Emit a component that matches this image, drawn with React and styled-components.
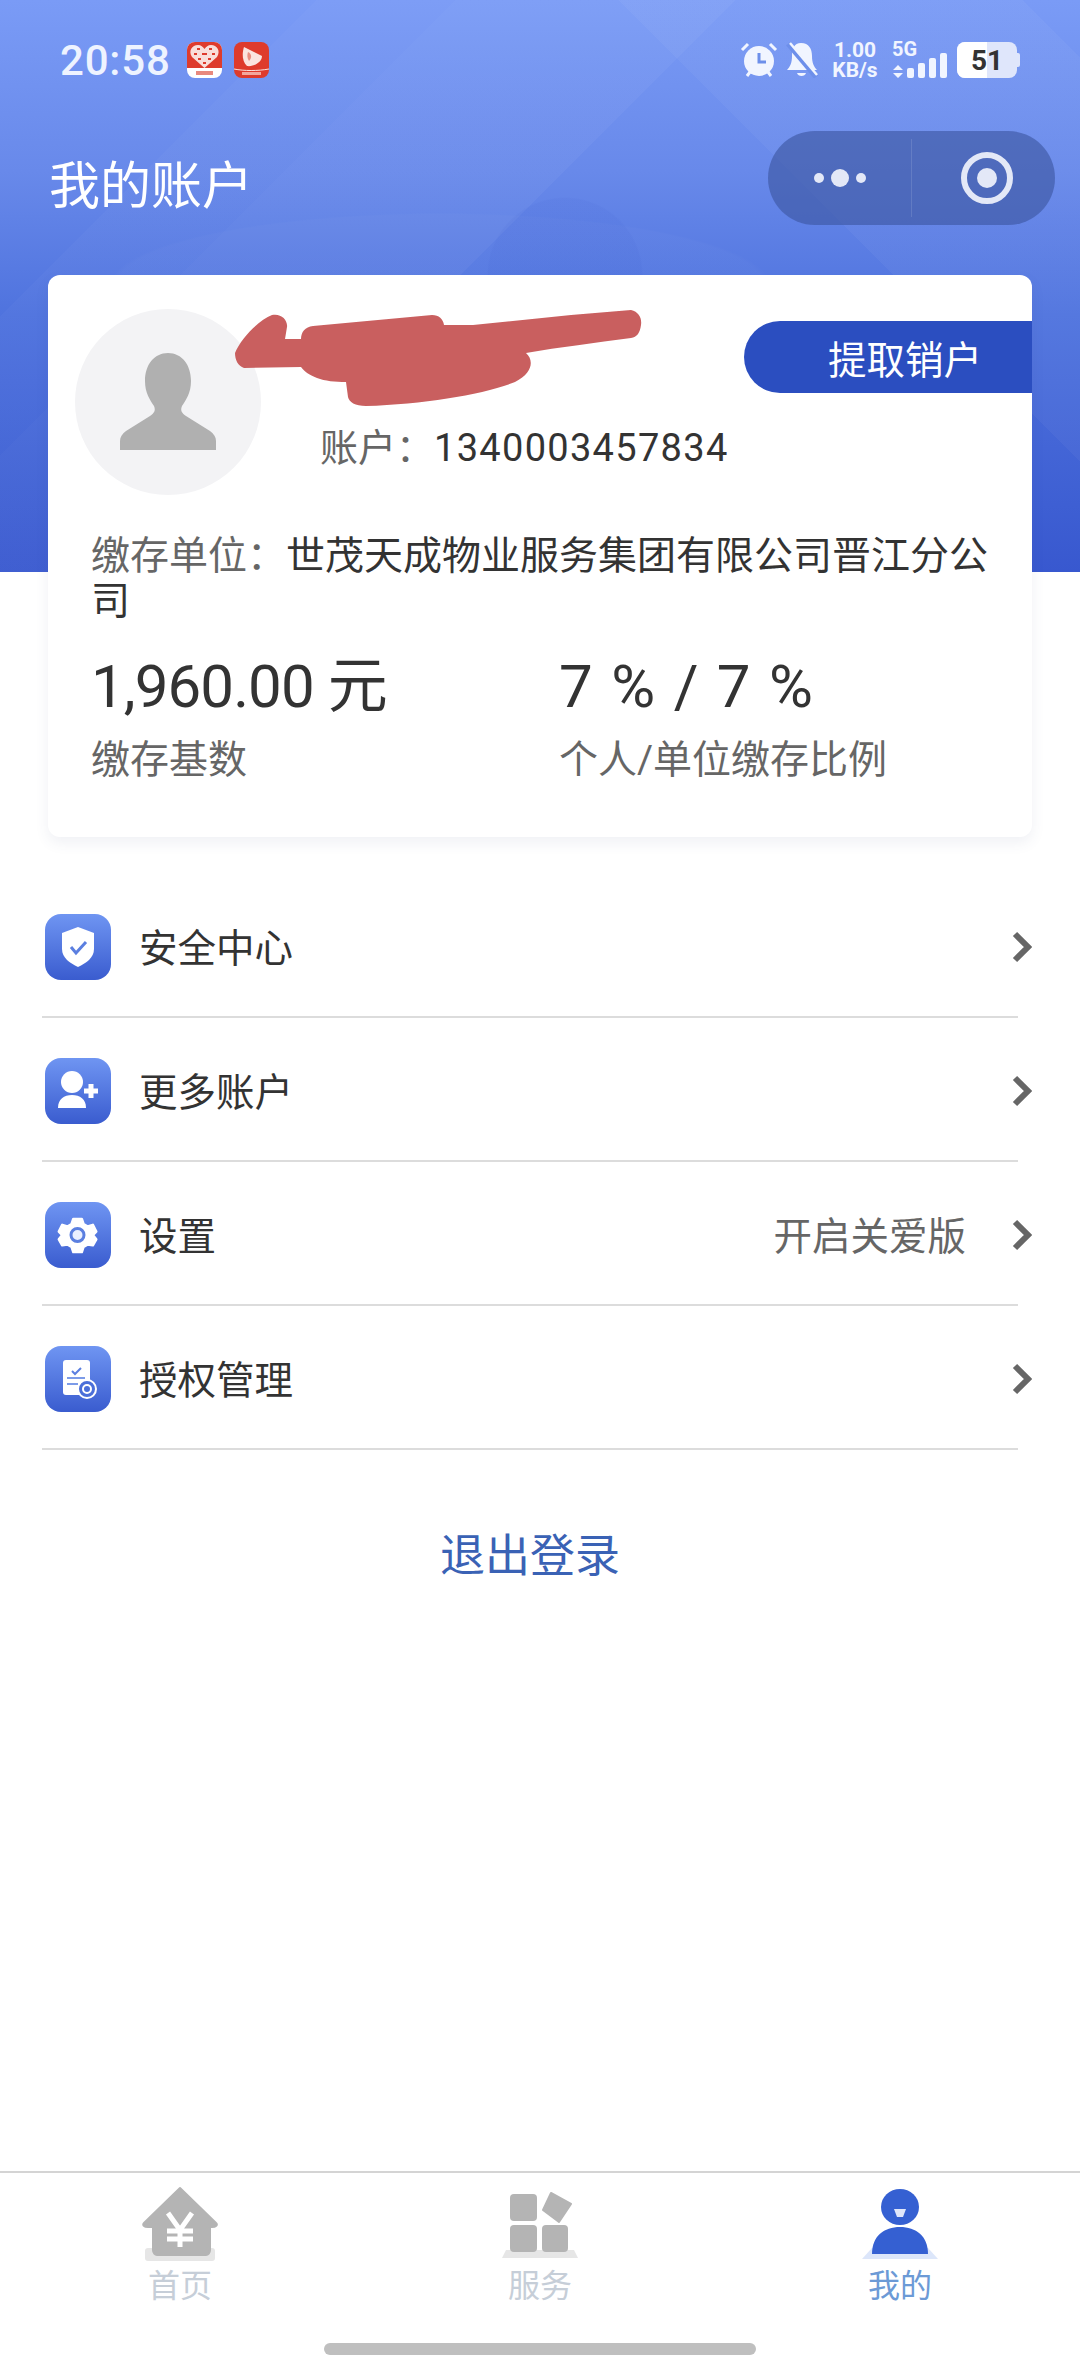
import React from 'react';
import styled, { createGlobalStyle } from 'styled-components';

const GlobalStyle = createGlobalStyle`
  html, body {
    margin: 0;
    padding: 0;
    background: #fff;
  }
  body {
    font-family: Roboto, "Noto Sans CJK SC", sans-serif;
    color: #333;
  }
`;

const rows = [
  { label: '安全中心', icon: 'shield' },
  { label: '更多账户', icon: 'person' },
  { label: '设置', icon: 'gear', extra: '开启关爱版' },
  { label: '授权管理', icon: 'doc' },
];

const ShieldGlyph = () => (
  <>
    <path d="M33 13 L49 19 V35 C49 44 41 49 33 53 C25 49 17 44 17 35 V19 Z" fill="#fff" />
    <path d="M26 33 L31 39 L41 28" fill="none" stroke="#5b7fe0" strokeWidth="3" />
  </>
);

const PersonGlyph = () => (
  <>
    <circle cx="27" cy="24" r="11" fill="#fff" />
    <path d="M13 50 C13 41 19 37 27 37 C35 37 41 41 41 50 Z" fill="#fff" />
    <path d="M46 26 V40 M39 33 H53" stroke="#fff" strokeWidth="5" />
  </>
);

const GearGlyph = () => (
  <>
    <path
      transform="translate(4.5 5) scale(0.85)"
      d="M28 14 H38 L40 20 L45 23 L51 21 L55 29 L51 33 L55 38 L51 45 L45 44 L40 47 L38 53 H28 L26 47 L21 44 L15 45 L11 38 L15 33 L11 29 L15 21 L21 23 L26 20 Z"
      fill="#fff"
      stroke="#fff"
      strokeWidth="3"
      strokeLinejoin="round"
    />
    <circle cx="32.5" cy="33" r="6.5" fill="#eaf0ff" stroke="#5b7fe0" strokeWidth="3" />
  </>
);

const DocGlyph = () => (
  <>
    <rect x="18" y="14" width="27" height="35" rx="3" fill="#fff" />
    <path d="M27 25 L30 28 L36 22" fill="none" stroke="#5b7fe0" strokeWidth="2" />
    <path d="M22 32 H40 M22 38 H33" stroke="#7c9be8" strokeWidth="2" />
    <circle cx="42" cy="43" r="9" fill="#4b6fd9" stroke="#fff" strokeWidth="2" />
    <circle cx="42" cy="43" r="4" fill="none" stroke="#fff" strokeWidth="2" />
  </>
);

const glyphs = { shield: ShieldGlyph, person: PersonGlyph, gear: GearGlyph, doc: DocGlyph };

const RowIcon = ({ name }) => {
  const Glyph = glyphs[name];
  return (
    <IconTile>
      <svg width="66" height="66" viewBox="0 0 66 66">
        <Glyph />
      </svg>
    </IconTile>
  );
};

const Chevron = () => (
  <ChevronSvg width="20" height="32" viewBox="0 0 20 32">
    <path d="M3 3 L16 16 L3 29" fill="none" stroke="#666" strokeWidth="6" />
  </ChevronSvg>
);

const HeartApp = () => (
  <svg width="35" height="36" viewBox="0 0 35 36">
    <rect width="35" height="36" rx="8" fill="#fff" />
    <path d="M0 26 V8 A8 8 0 0 1 8 0 H27 A8 8 0 0 1 35 8 V26 Z" fill="#de3b2c" />
    <path d="M17.5 26 L5 15 C1 9 5 3 11 3 C14 3 16 5 17.5 7 C19 5 21 3 24 3 C30 3 34 9 30 15 Z" fill="#f9ded9" />
    <path
      d="M10 7 H13 M22 7 H25 M7 12 H10 M15 12 H20 M25 12 H28 M11 17 H14 M21 17 H24 M16 21 H19"
      stroke="#de3b2c"
      strokeWidth="2"
    />
    <rect x="9" y="29" width="17" height="4" fill="#e8897e" />
  </svg>
);

const PlayApp = () => (
  <svg width="35" height="36" viewBox="0 0 35 36">
    <rect width="35" height="36" rx="8" fill="#de3b2c" />
    <path d="M10 5 L28 14 C28 20 20 25 13 24 C8 20 8 11 10 5 Z" fill="#fbe4df" />
    <path d="M14 10 C18 12 18 16 15 19 C13 16 13 13 14 10 Z" fill="#e98f82" />
    <path d="M0 27 C10 29 24 29 35 27" fill="none" stroke="#fbe4df" strokeWidth="1" />
    <rect x="8" y="30" width="19" height="3" fill="#f3a79c" />
  </svg>
);

const AlarmIcon = () => (
  <svg width="38" height="36" viewBox="0 0 38 36">
    <circle cx="19" cy="19" r="15" fill="#f1f5ff" />
    <path d="M2 8 L8 2 M36 8 L30 2 M7 34 L10 30 M31 34 L28 30" stroke="#f1f5ff" strokeWidth="3" />
    <path d="M19 11 V20 H26" fill="none" stroke="#6d8fea" strokeWidth="3" />
  </svg>
);

const MutedBell = () => (
  <BellSvg width="32" height="36" viewBox="0 0 32 36">
    <path d="M15 1 C23 1 26 7 26 14 C26 21 28 25 31 28 H1 C4 25 6 21 6 14 C6 7 8 1 15 1 Z" fill="#f1f5ff" />
    <path d="M11 31 H20 C19 35 12 35 11 31 Z" fill="#f1f5ff" />
    <path d="M2 2 L30 35" stroke="#6d8fea" strokeWidth="5" />
    <path d="M4 1 L31 33" stroke="#f1f5ff" strokeWidth="2.5" />
  </BellSvg>
);

const Signal = () => (
  <svg width="56" height="36" viewBox="0 0 56 36">
    <path d="M6 23 L11 28 H1 Z M6 36 L1 31 H11 Z" fill="#f1f5ff" />
    <rect x="15" y="26" width="7" height="10" rx="2" fill="#f1f5ff" />
    <rect x="26" y="21" width="7" height="15" rx="2" fill="#f1f5ff" />
    <rect x="37" y="16" width="7" height="20" rx="2" fill="#f1f5ff" />
    <rect x="48" y="11" width="7" height="25" rx="2" fill="#f1f5ff" />
  </svg>
);

const HomeTabIcon = () => (
  <svg width="84" height="76" viewBox="0 0 84 76">
    <rect x="7" y="62" width="70" height="13" rx="3" fill="#e6e6e6" />
    <path
      d="M42 2 L78 37 C80 39 78 41 74 41 H72 V64 C72 67 70 69 68 69 H19 C17 69 15 67 15 64 V41 H10 C6 41 4 39 6 37 Z"
      fill="#b4b4b4"
      stroke="#b4b4b4"
      strokeWidth="2"
      strokeLinejoin="round"
    />
    <path d="M30 27 L42 44 L54 27 M42 44 V61 M29 45 H55 M29 53 H55" fill="none" stroke="#fff" strokeWidth="5" />
  </svg>
);

const ServiceTabIcon = () => (
  <svg width="84" height="76" viewBox="0 0 84 76">
    <path d="M8 64 H76 L80 72 H4 Z" fill="#e6e6e6" />
    <rect x="12" y="8" width="27" height="27" rx="4" fill="#b4b4b4" />
    <rect x="12" y="39" width="27" height="27" rx="4" fill="#b4b4b4" />
    <rect x="44" y="39" width="26" height="27" rx="4" fill="#b4b4b4" />
    <path
      d="M53 7 L73 18 L61 36 L45 24 Z"
      fill="#b4b4b4"
      stroke="#b4b4b4"
      strokeWidth="2"
      strokeLinejoin="round"
    />
  </svg>
);

const MeTabIcon = () => (
  <svg width="84" height="76" viewBox="0 0 84 76">
    <path d="M14 62 H70 L80 73 H4 Z" fill="#dce6fa" />
    <ellipse cx="42" cy="21" rx="19" ry="18" fill="#3560d2" />
    <path d="M36 23 H48 L45 31 H39 Z" fill="#dfe6fa" />
    <path d="M14 68 C14 50 26 41 42 41 C58 41 70 50 70 68 Z" fill="#3560d2" />
  </svg>
);

const Avatar = () => (
  <AvatarCircle>
    <svg width="96" height="97" viewBox="0 0 96 97">
      <path
        d="M48 0 C62 0 71 12 71 28 C71 40 66 47 62 53 C60 58 62 60 66 63 L90 78 C94 81 96 84 96 88 V97 H0 V88 C0 84 2 81 6 78 L30 63 C34 60 36 58 34 53 C30 47 25 40 25 28 C25 12 34 0 48 0 Z"
        fill="#b0b0b0"
      />
    </svg>
  </AvatarCircle>
);

export default function App() {
  return (
    <>
      <GlobalStyle />
      <Page>
        <StatusBar>
          <StatusLeft>
            <Clock>20:58</Clock>
            <HeartApp />
            <PlayApp />
          </StatusLeft>
          <StatusRight>
            <AlarmIcon />
            <MutedBell />
            <NetSpeed>
              <span>1.00</span>
              <span>KB/s</span>
            </NetSpeed>
            <NetType>
              <NetLabel>5G</NetLabel>
              <Signal />
            </NetType>
            <Battery>
              <BatteryFill />
              <BatteryText>51</BatteryText>
            </Battery>
          </StatusRight>
        </StatusBar>

        <NavBar>
          <Title>我的账户</Title>
          <Capsule>
            <MoreDots>
              <Dot size={10} />
              <Dot size={18} />
              <Dot size={10} />
            </MoreDots>
            <CapsuleDivider />
            <CloseRing />
          </Capsule>
        </NavBar>

        <Card>
          <TopRow>
            <Avatar />
            <AccountLine>
              <Muted>账户：</Muted>1340003457834
            </AccountLine>
            <CancelButton>提取销户</CancelButton>
          </TopRow>
          <Scribble viewBox="0 0 407 96">
            <path
              d="M0 43 C6 28 24 10 37 5 C46 3 53 10 52 17 L50 29 L66 29 C66 22 70 17 78 16 L197 5 C204 5 208 9 209 15 L238 15 L336 5 L396 0 C404 2 407 8 406 15 C405 23 402 27 396 28 C360 33 325 37 291 43 C299 50 298 63 280 72 C250 84 190 94 131 96 C120 96 114 92 113 87 L111 72 C100 72 90 71 82 68 C74 65 69 61 66 57 L9 58 C3 56 0 50 0 43 Z"
              fill="#c95f5f"
            />
          </Scribble>
          <Company>
            <Muted>缴存单位：</Muted>世茂天成物业服务集团有限公司晋江分公司
          </Company>
          <Stats>
            <div>
              <StatValue>1,960.00 元</StatValue>
              <StatLabel>缴存基数</StatLabel>
            </div>
            <div>
              <StatValue wide>7 % / 7 %</StatValue>
              <StatLabel>个人/单位缴存比例</StatLabel>
            </div>
          </Stats>
        </Card>

        <List>
          {rows.map((row) => (
            <ListItem key={row.label}>
              <Row>
                <RowIcon name={row.icon} />
                <RowLabel>{row.label}</RowLabel>
                {row.extra && <RowExtra>{row.extra}</RowExtra>}
                <Chevron />
              </Row>
            </ListItem>
          ))}
        </List>

        <Logout>退出登录</Logout>

        <TabBar>
          <Tab>
            <HomeTabIcon />
            <TabLabel>首页</TabLabel>
          </Tab>
          <Tab>
            <ServiceTabIcon />
            <TabLabel>服务</TabLabel>
          </Tab>
          <Tab>
            <MeTabIcon />
            <TabLabel active>我的</TabLabel>
          </Tab>
        </TabBar>
        <HomeIndicator />
      </Page>
    </>
  );
}

const Page = styled.div`
  width: 1080px;
  height: 2376px;
  overflow: hidden;
  display: flex;
  flex-direction: column;
  background:
    radial-gradient(78px 78px at 565px 275px, rgba(40, 70, 190, 0.055) 98%, transparent) 0 0 / 100% 572px no-repeat,
    radial-gradient(330px 72px at 440px 285px, rgba(255, 255, 255, 0.02) 98%, transparent) 0 0 / 100% 572px no-repeat,
    linear-gradient(135deg, transparent 224px, rgba(255, 255, 255, 0.025) 224px, rgba(255, 255, 255, 0.025) 322px, rgba(255, 255, 255, 0.04) 322px, rgba(255, 255, 255, 0.04) 520px, transparent 520px) 0 0 / 100% 572px no-repeat,
    linear-gradient(225deg, transparent 41px, rgba(255, 255, 255, 0.035) 41px, rgba(255, 255, 255, 0.035) 326px, transparent 326px) 0 0 / 100% 572px no-repeat,
    linear-gradient(180deg, #7a9bf6 0%, #6889ea 30%, #4f73de 55%, #3858cf 100%) 0 0 / 100% 572px no-repeat,
    #fff;
`;

const StatusBar = styled.div`
  height: 131px;
  box-sizing: border-box;
  padding: 42px 63px 0 60px;
  display: flex;
  justify-content: space-between;
  align-items: flex-start;
`;

const StatusLeft = styled.div`
  display: flex;
  align-items: center;
  gap: 12px;
  height: 36px;
`;

const Clock = styled.span`
  font-size: 42px;
  font-weight: 500;
  letter-spacing: 0.8px;
  color: #eef3ff;
  margin-right: 4px;
`;

const StatusRight = styled.div`
  display: flex;
  align-items: flex-start;
  height: 36px;
`;

const BellSvg = styled.svg`
  margin-left: 8px;
`;

const NetSpeed = styled.div`
  display: flex;
  flex-direction: column;
  align-items: center;
  width: 44px;
  margin: -2px 0 0 15px;
  font-size: 21px;
  line-height: 20px;
  font-weight: 700;
  color: #f1f5ff;
`;

const NetType = styled.div`
  position: relative;
  width: 56px;
  margin: 0 9px 0 15px;
`;

const NetLabel = styled.span`
  position: absolute;
  left: 0;
  top: -3px;
  font-size: 20px;
  line-height: 20px;
  font-weight: 700;
  color: #f1f5ff;
`;

const Battery = styled.div`
  position: relative;
  width: 60px;
  height: 36px;
  border-radius: 8px;
  background: #dfe6fb;
  display: flex;
  align-items: center;
  justify-content: center;
  &::after {
    content: '';
    position: absolute;
    right: -3px;
    top: 11px;
    width: 3px;
    height: 14px;
    border-radius: 0 2px 2px 0;
    background: #dfe6fb;
  }
`;

const BatteryFill = styled.div`
  position: absolute;
  left: 0;
  top: 0;
  bottom: 0;
  width: 30px;
  background: #fff;
  border-radius: 8px 0 0 8px;
`;

const BatteryText = styled.span`
  position: relative;
  font-size: 28px;
  font-weight: 700;
  color: #333;
`;

const NavBar = styled.div`
  height: 94px;
  padding: 0 25px 0 49px;
  display: flex;
  align-items: center;
  justify-content: space-between;
`;

const Title = styled.h1`
  margin: 0;
  padding-top: 8px;
  font-size: 51px;
  font-weight: 400;
  color: #fff;
`;

const Capsule = styled.div`
  width: 287px;
  height: 94px;
  border-radius: 47px;
  background: rgba(60, 85, 160, 0.62);
  display: flex;
  align-items: center;
`;

const MoreDots = styled.div`
  width: 143px;
  display: flex;
  align-items: center;
  justify-content: center;
  gap: 7px;
`;

const Dot = styled.span`
  width: ${({ size }) => size}px;
  height: ${({ size }) => size}px;
  border-radius: 50%;
  background: #e3e8f7;
`;

const CapsuleDivider = styled.span`
  width: 1px;
  height: 78px;
  background: rgba(255, 255, 255, 0.12);
`;

const CloseRing = styled.span`
  width: 40px;
  height: 40px;
  margin-left: 49px;
  border: 6px solid #e3e8f7;
  border-radius: 50%;
  display: flex;
  align-items: center;
  justify-content: center;
  &::before {
    content: '';
    width: 20px;
    height: 20px;
    border-radius: 50%;
    background: #e3e8f7;
  }
`;

const Card = styled.section`
  position: relative;
  width: 984px;
  height: 562px;
  box-sizing: border-box;
  margin: 50px 0 0 48px;
  padding-top: 34px;
  border-radius: 12px;
  background: #fff;
  box-shadow: 0 6px 14px rgba(60, 80, 130, 0.08);
`;

const TopRow = styled.div`
  display: flex;
  align-items: flex-start;
  padding-left: 27px;
`;

const AvatarCircle = styled.div`
  flex: none;
  width: 186px;
  height: 186px;
  border-radius: 50%;
  background: #f3f3f5;
  display: flex;
  align-items: flex-start;
  justify-content: center;
  padding-top: 44px;
  box-sizing: border-box;
`;

const AccountLine = styled.div`
  flex: 1;
  margin: 113px 0 0 59px;
  font-size: 38px;
  line-height: 52px;
  letter-spacing: 1.3px;
  white-space: nowrap;
  color: #333;
`;

const Muted = styled.span`
  color: #666;
  letter-spacing: 0;
`;

const CancelButton = styled.button`
  flex: none;
  width: 288px;
  height: 72px;
  margin-top: 12px;
  padding: 0 0 0 34px;
  border: 0;
  border-radius: 36px 0 0 36px;
  background: #2b4ec0;
  color: #fff;
  font-family: inherit;
  font-size: 38.5px;
`;

const Scribble = styled.svg`
  position: absolute;
  left: 187px;
  top: 35px;
  width: 407px;
  height: 96px;
`;

const Company = styled.p`
  margin: 39px 30px 0 43px;
  font-size: 39px;
  line-height: 45px;
  color: #333;
`;

const Stats = styled.div`
  display: grid;
  grid-template-columns: 468px 1fr;
  margin: 25px 0 0 43px;
`;

const StatValue = styled.div`
  font-size: 60px;
  line-height: 76px;
  letter-spacing: ${({ wide }) => (wide ? '1.8px' : '-0.9px')};
  color: #333;
`;

const StatLabel = styled.div`
  margin-top: 9px;
  font-size: 39px;
  line-height: 52px;
  color: #666;
`;

const List = styled.ul`
  list-style: none;
  margin: 37px 62px 0 42px;
  padding: 0;
`;

const ListItem = styled.li`
  border-bottom: 2px solid #dcdcdc;
`;

const Row = styled.div`
  height: 142px;
  margin-right: -14px;
  padding-left: 3px;
  display: flex;
  align-items: center;
`;

const IconTile = styled.div`
  width: 66px;
  height: 66px;
  margin-top: 4px;
  border-radius: 16px;
  background: linear-gradient(180deg, #6f95f2, #3a5ccf);
`;

const ChevronSvg = styled.svg`
  margin-top: 4px;
`;

const RowLabel = styled.span`
  flex: 1;
  margin-left: 28px;
  font-size: 38.5px;
  color: #333;
`;

const RowExtra = styled.span`
  margin-right: 46px;
  font-size: 38.5px;
  color: #666;
`;

const Logout = styled.div`
  margin-top: 77px;
  padding-right: 20px;
  text-align: center;
  font-size: 45px;
  line-height: 60px;
  color: #3a62b5;
`;

const TabBar = styled.nav`
  margin-top: auto;
  padding-top: 13px;
  border-top: 2px solid #d4d4d4;
  display: grid;
  grid-template-columns: repeat(3, 1fr);
`;

const Tab = styled.div`
  display: flex;
  flex-direction: column;
  align-items: center;
`;

const TabLabel = styled.span`
  margin-top: 2px;
  font-size: 32px;
  line-height: 44px;
  color: ${({ active }) => (active ? '#6c9ad6' : '#c6ced8')};
`;

const HomeIndicator = styled.div`
  flex: none;
  width: 432px;
  height: 12px;
  margin: 35px auto 21px;
  border-radius: 6px;
  background: #bfbfbf;
`;
